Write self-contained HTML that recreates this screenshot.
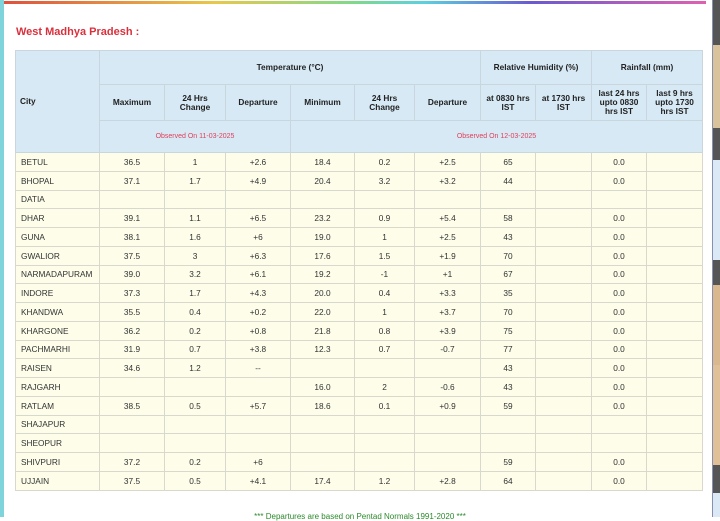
<!DOCTYPE html>
<html><head><meta charset="utf-8"><style>
*{margin:0;padding:0;box-sizing:border-box}
body{width:720px;height:517px;overflow:hidden;background:#fff;font-family:"Liberation Sans",sans-serif;position:relative}
.top{position:absolute;left:4px;top:1px;width:702px;height:3px;background:linear-gradient(90deg,#e0503c,#e8c84a 30%,#7ed98a 50%,#5ad0e0 60%,#6a5ad0 75%,#e060b0 100%)}
.left{position:absolute;left:0;top:0;width:4px;height:517px;background:#7fd3db}
.rline{position:absolute;left:712px;top:0;width:1px;height:517px;background:#8a8fb0}
.rs{position:absolute;left:713px;width:7px}
h2{position:absolute;left:16px;top:26px;font-size:11px;color:#d9303c;font-weight:bold}
table{position:absolute;left:15px;top:50px;border-collapse:collapse;table-layout:fixed;width:687px;font-size:8.3px;color:#222}
td,th{border:1px solid #c9d6de;text-align:center;padding:0;overflow:hidden}
th{background:#d6e9f5;font-weight:bold;color:#222;line-height:9px}
tr.h1 th{height:34px}
tr.h2 th{height:36px}
tr.h3 th{height:32px;color:#e0405a;font-weight:normal;font-size:7px}
tbody td{background:#fdfdea;height:18.76px;color:#333;border-color:#d8d8cc}
tbody td:first-child{text-align:left;padding-left:5px}
th.city{text-align:left;padding-left:4px}
.foot{position:absolute;left:0;width:720px;top:512px;text-align:center;color:#2a8a2a;font-size:8px}
</style></head><body>
<div class="left"></div><div class="top"></div><div class="rline"></div>
<div class="rs" style="top:0;height:45px;background:#555"></div>
<div class="rs" style="top:45px;height:83px;background:#d9c39c"></div>
<div class="rs" style="top:128px;height:32px;background:#555"></div>
<div class="rs" style="top:160px;height:100px;background:#dbe9f7"></div>
<div class="rs" style="top:260px;height:25px;background:#555"></div>
<div class="rs" style="top:285px;height:80px;background:#d9b890"></div>
<div class="rs" style="top:365px;height:100px;background:#e0c098"></div>
<div class="rs" style="top:465px;height:28px;background:#555"></div>
<div class="rs" style="top:493px;height:24px;background:#dbe9f7"></div>
<h2>West Madhya Pradesh :</h2>
<table>
<colgroup><col style="width:84px"><col style="width:65px"><col style="width:61px"><col style="width:65px"><col style="width:64px"><col style="width:60px"><col style="width:66px"><col style="width:55px"><col style="width:56px"><col style="width:55px"><col style="width:56px"></colgroup>
<thead>
<tr class="h1"><th rowspan="3" class="city">City</th><th colspan="6">Temperature (°C)</th><th colspan="2">Relative Humidity (%)</th><th colspan="2">Rainfall (mm)</th></tr>
<tr class="h2"><th>Maximum</th><th>24 Hrs<br>Change</th><th>Departure</th><th>Minimum</th><th>24 Hrs<br>Change</th><th>Departure</th><th>at 0830 hrs<br>IST</th><th>at 1730 hrs<br>IST</th><th>last 24 hrs<br>upto 0830<br>hrs IST</th><th>last 9 hrs<br>upto 1730<br>hrs IST</th></tr>
<tr class="h3"><th colspan="3">Observed On 11-03-2025</th><th colspan="7">Observed On 12-03-2025</th></tr>
</thead>
<tbody>
<tr><td>BETUL</td><td>36.5</td><td>1</td><td>+2.6</td><td>18.4</td><td>0.2</td><td>+2.5</td><td>65</td><td></td><td>0.0</td><td></td></tr>
<tr><td>BHOPAL</td><td>37.1</td><td>1.7</td><td>+4.9</td><td>20.4</td><td>3.2</td><td>+3.2</td><td>44</td><td></td><td>0.0</td><td></td></tr>
<tr><td>DATIA</td><td></td><td></td><td></td><td></td><td></td><td></td><td></td><td></td><td></td><td></td></tr>
<tr><td>DHAR</td><td>39.1</td><td>1.1</td><td>+6.5</td><td>23.2</td><td>0.9</td><td>+5.4</td><td>58</td><td></td><td>0.0</td><td></td></tr>
<tr><td>GUNA</td><td>38.1</td><td>1.6</td><td>+6</td><td>19.0</td><td>1</td><td>+2.5</td><td>43</td><td></td><td>0.0</td><td></td></tr>
<tr><td>GWALIOR</td><td>37.5</td><td>3</td><td>+6.3</td><td>17.6</td><td>1.5</td><td>+1.9</td><td>70</td><td></td><td>0.0</td><td></td></tr>
<tr><td>NARMADAPURAM</td><td>39.0</td><td>3.2</td><td>+6.1</td><td>19.2</td><td>-1</td><td>+1</td><td>67</td><td></td><td>0.0</td><td></td></tr>
<tr><td>INDORE</td><td>37.3</td><td>1.7</td><td>+4.3</td><td>20.0</td><td>0.4</td><td>+3.3</td><td>35</td><td></td><td>0.0</td><td></td></tr>
<tr><td>KHANDWA</td><td>35.5</td><td>0.4</td><td>+0.2</td><td>22.0</td><td>1</td><td>+3.7</td><td>70</td><td></td><td>0.0</td><td></td></tr>
<tr><td>KHARGONE</td><td>36.2</td><td>0.2</td><td>+0.8</td><td>21.8</td><td>0.8</td><td>+3.9</td><td>75</td><td></td><td>0.0</td><td></td></tr>
<tr><td>PACHMARHI</td><td>31.9</td><td>0.7</td><td>+3.8</td><td>12.3</td><td>0.7</td><td>-0.7</td><td>77</td><td></td><td>0.0</td><td></td></tr>
<tr><td>RAISEN</td><td>34.6</td><td>1.2</td><td>--</td><td></td><td></td><td></td><td>43</td><td></td><td>0.0</td><td></td></tr>
<tr><td>RAJGARH</td><td></td><td></td><td></td><td>16.0</td><td>2</td><td>-0.6</td><td>43</td><td></td><td>0.0</td><td></td></tr>
<tr><td>RATLAM</td><td>38.5</td><td>0.5</td><td>+5.7</td><td>18.6</td><td>0.1</td><td>+0.9</td><td>59</td><td></td><td>0.0</td><td></td></tr>
<tr><td>SHAJAPUR</td><td></td><td></td><td></td><td></td><td></td><td></td><td></td><td></td><td></td><td></td></tr>
<tr><td>SHEOPUR</td><td></td><td></td><td></td><td></td><td></td><td></td><td></td><td></td><td></td><td></td></tr>
<tr><td>SHIVPURI</td><td>37.2</td><td>0.2</td><td>+6</td><td></td><td></td><td></td><td>59</td><td></td><td>0.0</td><td></td></tr>
<tr><td>UJJAIN</td><td>37.5</td><td>0.5</td><td>+4.1</td><td>17.4</td><td>1.2</td><td>+2.8</td><td>64</td><td></td><td>0.0</td><td></td></tr>
</tbody>
</table>
<div class="foot">*** Departures are based on Pentad Normals 1991-2020 ***</div>
</body></html>
